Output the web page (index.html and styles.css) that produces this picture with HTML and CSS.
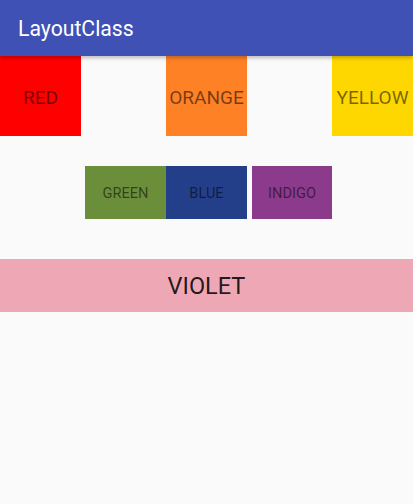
FILE: index.html
```html
<!DOCTYPE html>
<html>
<head>
<meta charset="utf-8">
<link rel="stylesheet" href="styles.css">
</head>
<body>
<header class="appbar"><span class="title">LayoutClass</span></header>
<main class="content">
  <div class="row-top">
    <div class="box big red">RED</div>
    <div class="box big orange">ORANGE</div>
    <div class="box big yellow">YELLOW</div>
  </div>
  <div class="row-mid">
    <div class="pair">
      <div class="box small green">GREEN</div>
      <div class="box small blue">BLUE</div>
    </div>
    <div class="box small indigo">INDIGO</div>
  </div>
  <div class="violet">VIOLET</div>
</main>
</body>
</html>
```
FILE: styles.css
```css
html, body {
  margin: 0;
  padding: 0;
  background: #fafafa;
  font-family: Roboto, "Noto Sans", sans-serif;
  width: 413px;
  height: 504px;
  overflow: hidden;
}
.appbar {
  position: relative;
  z-index: 2;
  height: 56px;
  background: #3f51b5;
  display: flex;
  align-items: center;
  padding-left: 18px;
  box-shadow: 0 2px 4px rgba(0,0,0,0.25);
}
.title {
  color: #fff;
  font-size: 21.2px;
  font-weight: 400;
}
.content {
  display: flex;
  flex-direction: column;
}
.row-top {
  display: flex;
  justify-content: space-between;
}
.box {
  display: flex;
  align-items: center;
  justify-content: center;
  color: rgba(0,0,0,0.54);
}
.big {
  width: 81px;
  height: 80px;
  font-size: 19px;
  padding-top: 2px;
  box-sizing: border-box;
}
.red { background: #ff0000; }
.orange { background: #ff8126; }
.yellow { background: #ffd700; }
.row-mid {
  display: flex;
  justify-content: center;
  gap: 5px;
  margin-top: 30px;
  padding-left: 4px;
}
.pair { display: flex; }
.small {
  width: 81px;
  height: 53px;
  font-size: 14.6px;
}
.green { background: #6b8e3a; }
.blue { background: #243f8a; }
.indigo { background: #8c3a8c; width: 80px; }
.violet {
  margin-top: 40px;
  height: 53px;
  background: #eea8b5;
  display: flex;
  align-items: center;
  justify-content: center;
  font-size: 23.5px;
  color: rgba(0,0,0,0.87);
}
```
